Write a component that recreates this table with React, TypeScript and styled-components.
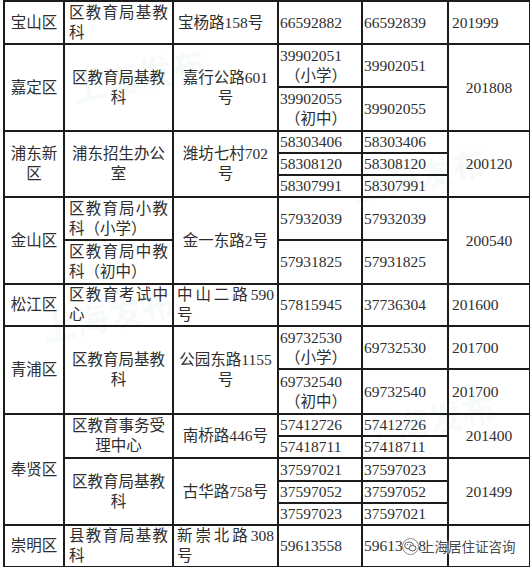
import React from 'react'
import styled, { createGlobalStyle } from 'styled-components'

const GlobalStyle = createGlobalStyle`
  html, body {
    margin: 0;
    padding: 0;
    background: #ffffff;
  }
  body {
    font-family: "Liberation Serif", "Noto Sans CJK SC", serif;
  }
`

const Page = styled.div`
  position: relative;
  width: 530px;
  height: 567px;
  overflow: hidden;
  padding: 0 0 0 3px;
  box-sizing: border-box;
`

const Table = styled.table`
  position: relative;
  border-collapse: collapse;
  table-layout: fixed;
  width: 526px;
  color: #2e2e2e;
  font-size: 15.5px;
  line-height: 20px;
`

const Row = styled.tr<{ $h: number }>`
  height: ${({ $h }) => $h}px;
`

const Cell = styled.td<{ $align?: 'left' | 'center'; $pad?: number }>`
  border: 2px solid #1c1c1c;
  padding: 0 ${({ $pad = 1 }) => $pad}px;
  text-align: ${({ $align = 'left' }) => $align};
  vertical-align: middle;
  white-space: nowrap;
  overflow: hidden;
`

const Line = styled.div<{ $spread?: boolean }>`
  text-align: ${({ $spread }) => ($spread ? 'justify' : 'inherit')};
  text-align-last: ${({ $spread }) => ($spread ? 'justify' : 'auto')};
`

const Note = styled.div`
  padding-left: 5px;
`

const Ghost = styled.div<{ $x: number; $y: number }>`
  position: absolute;
  left: ${({ $x }) => $x}px;
  top: ${({ $y }) => $y}px;
  font-family: "Noto Sans CJK SC", sans-serif;
  font-size: 34px;
  font-weight: 700;
  color: rgba(120, 190, 150, 0.07);
  transform: rotate(-12deg);
  pointer-events: none;
  white-space: nowrap;
`

const Mark = styled.div`
  position: absolute;
  left: 402px;
  top: 536px;
  display: flex;
  align-items: center;
  gap: 2px;
  font-family: "Noto Sans CJK SC", sans-serif;
  font-size: 13.5px;
  color: #4a4a4a;
  text-shadow: 0 0 2px #fff, 0 0 2px #fff, 0 0 3px #fff;
`

const lines = (items: string[], spread = false) =>
  items.map((t, i) => (
    <Line key={i} $spread={spread && i < items.length - 1}>
      {t}
    </Line>
  ))

const phone = (num: string, note: string) => (
  <>
    <div>{num}</div>
    <Note>{note}</Note>
  </>
)

function WeChat() {
  return (
    <svg width="17" height="17" viewBox="0 0 17 17">
      <circle cx="8.5" cy="8.5" r="8" fill="#ffffff" stroke="#8a8a8a" strokeWidth="1" />
      <ellipse cx="7" cy="7.5" rx="4.2" ry="3.4" fill="none" stroke="#5a5a5a" strokeWidth="1" />
      <ellipse cx="10.5" cy="10.2" rx="3.4" ry="2.7" fill="#fff" stroke="#5a5a5a" strokeWidth="1" />
      <circle cx="5.6" cy="6.6" r="0.6" fill="#5a5a5a" />
      <circle cx="8.2" cy="6.6" r="0.6" fill="#5a5a5a" />
    </svg>
  )
}

export default function App() {
  return (
    <Page>
      <GlobalStyle />
      <Ghost $x={70} $y={50}>上海发布</Ghost>
      <Ghost $x={350} $y={150}>上海发布</Ghost>
      <Ghost $x={40} $y={290}>上海发布</Ghost>
      <Ghost $x={360} $y={395}>上海发布</Ghost>
      <Table>
        <colgroup>
          <col style={{ width: 60 }} />
          <col style={{ width: 109 }} />
          <col style={{ width: 105 }} />
          <col style={{ width: 84 }} />
          <col style={{ width: 86 }} />
          <col style={{ width: 82 }} />
        </colgroup>
        <tbody>
          <Row $h={43}>
            <Cell $align="center">宝山区</Cell>
            <Cell $pad={4}>{lines(['区教育局基教', '科'], true)}</Cell>
            <Cell $pad={4}>宝杨路158号</Cell>
            <Cell>66592882</Cell>
            <Cell>66592839</Cell>
            <Cell $pad={3}>201999</Cell>
          </Row>

          <Row $h={43}>
            <Cell $align="center" rowSpan={2}>嘉定区</Cell>
            <Cell $align="center" rowSpan={2}>{lines(['区教育局基教', '科'])}</Cell>
            <Cell $align="center" rowSpan={2}>{lines(['嘉行公路601', '号'])}</Cell>
            <Cell>{phone('39902051', '（小学）')}</Cell>
            <Cell>39902051</Cell>
            <Cell $align="center" rowSpan={2}>201808</Cell>
          </Row>
          <Row $h={44}>
            <Cell>{phone('39902055', '（初中）')}</Cell>
            <Cell>39902055</Cell>
          </Row>

          <Row $h={22}>
            <Cell $align="center" rowSpan={3}>{lines(['浦东新', '区'])}</Cell>
            <Cell $align="center" rowSpan={3}>{lines(['浦东招生办公', '室'])}</Cell>
            <Cell $align="center" rowSpan={3}>{lines(['潍坊七村702', '号'])}</Cell>
            <Cell>58303406</Cell>
            <Cell>58303406</Cell>
            <Cell $align="center" rowSpan={3}>200120</Cell>
          </Row>
          <Row $h={22}>
            <Cell>58308120</Cell>
            <Cell>58308120</Cell>
          </Row>
          <Row $h={21}>
            <Cell>58307991</Cell>
            <Cell>58307991</Cell>
          </Row>

          <Row $h={43}>
            <Cell $align="center" rowSpan={2}>金山区</Cell>
            <Cell $pad={4}>{lines(['区教育局小教', '科（小学）'], true)}</Cell>
            <Cell $align="center" rowSpan={2}>金一东路2号</Cell>
            <Cell>57932039</Cell>
            <Cell>57932039</Cell>
            <Cell $align="center" rowSpan={2}>200540</Cell>
          </Row>
          <Row $h={44}>
            <Cell $pad={4}>{lines(['区教育局中教', '科（初中）'], true)}</Cell>
            <Cell>57931825</Cell>
            <Cell>57931825</Cell>
          </Row>

          <Row $h={42}>
            <Cell $align="center">松江区</Cell>
            <Cell $pad={4}>{lines(['区教育考试中', '心'], true)}</Cell>
            <Cell $pad={3}>{lines(['中山二路590', '号'], true)}</Cell>
            <Cell>57815945</Cell>
            <Cell>37736304</Cell>
            <Cell $pad={3}>201600</Cell>
          </Row>

          <Row $h={43}>
            <Cell $align="center" rowSpan={2}>青浦区</Cell>
            <Cell $align="center" rowSpan={2}>{lines(['区教育局基教', '科'])}</Cell>
            <Cell $align="center" rowSpan={2}>{lines(['公园东路1155', '号'])}</Cell>
            <Cell>{phone('69732530', '（小学）')}</Cell>
            <Cell>69732530</Cell>
            <Cell $pad={3}>201700</Cell>
          </Row>
          <Row $h={45}>
            <Cell>{phone('69732540', '（初中）')}</Cell>
            <Cell>69732540</Cell>
            <Cell $pad={3}>201700</Cell>
          </Row>

          <Row $h={20}>
            <Cell $align="center" rowSpan={5}>奉贤区</Cell>
            <Cell $align="center" rowSpan={2}>{lines(['区教育事务受', '理中心'])}</Cell>
            <Cell $align="center" rowSpan={2}>南桥路446号</Cell>
            <Cell>57412726</Cell>
            <Cell>57412726</Cell>
            <Cell $align="center" rowSpan={2}>201400</Cell>
          </Row>
          <Row $h={22}>
            <Cell>57418711</Cell>
            <Cell>57418711</Cell>
          </Row>
          <Row $h={23}>
            <Cell $align="center" rowSpan={3}>{lines(['区教育局基教', '科'])}</Cell>
            <Cell $align="center" rowSpan={3}>古华路758号</Cell>
            <Cell>37597021</Cell>
            <Cell>37597023</Cell>
            <Cell $align="center" rowSpan={3}>201499</Cell>
          </Row>
          <Row $h={22}>
            <Cell>37597052</Cell>
            <Cell>37597052</Cell>
          </Row>
          <Row $h={22}>
            <Cell>37597023</Cell>
            <Cell>37597021</Cell>
          </Row>

          <Row $h={41}>
            <Cell $align="center">崇明区</Cell>
            <Cell $pad={4}>{lines(['县教育局基教', '科'], true)}</Cell>
            <Cell $pad={3}>{lines(['新崇北路308', '号'], true)}</Cell>
            <Cell>59613558</Cell>
            <Cell>59613558</Cell>
            <Cell></Cell>
          </Row>
        </tbody>
      </Table>
      <Mark>
        <WeChat />
        <span>上海居住证咨询</span>
      </Mark>
    </Page>
  )
}
